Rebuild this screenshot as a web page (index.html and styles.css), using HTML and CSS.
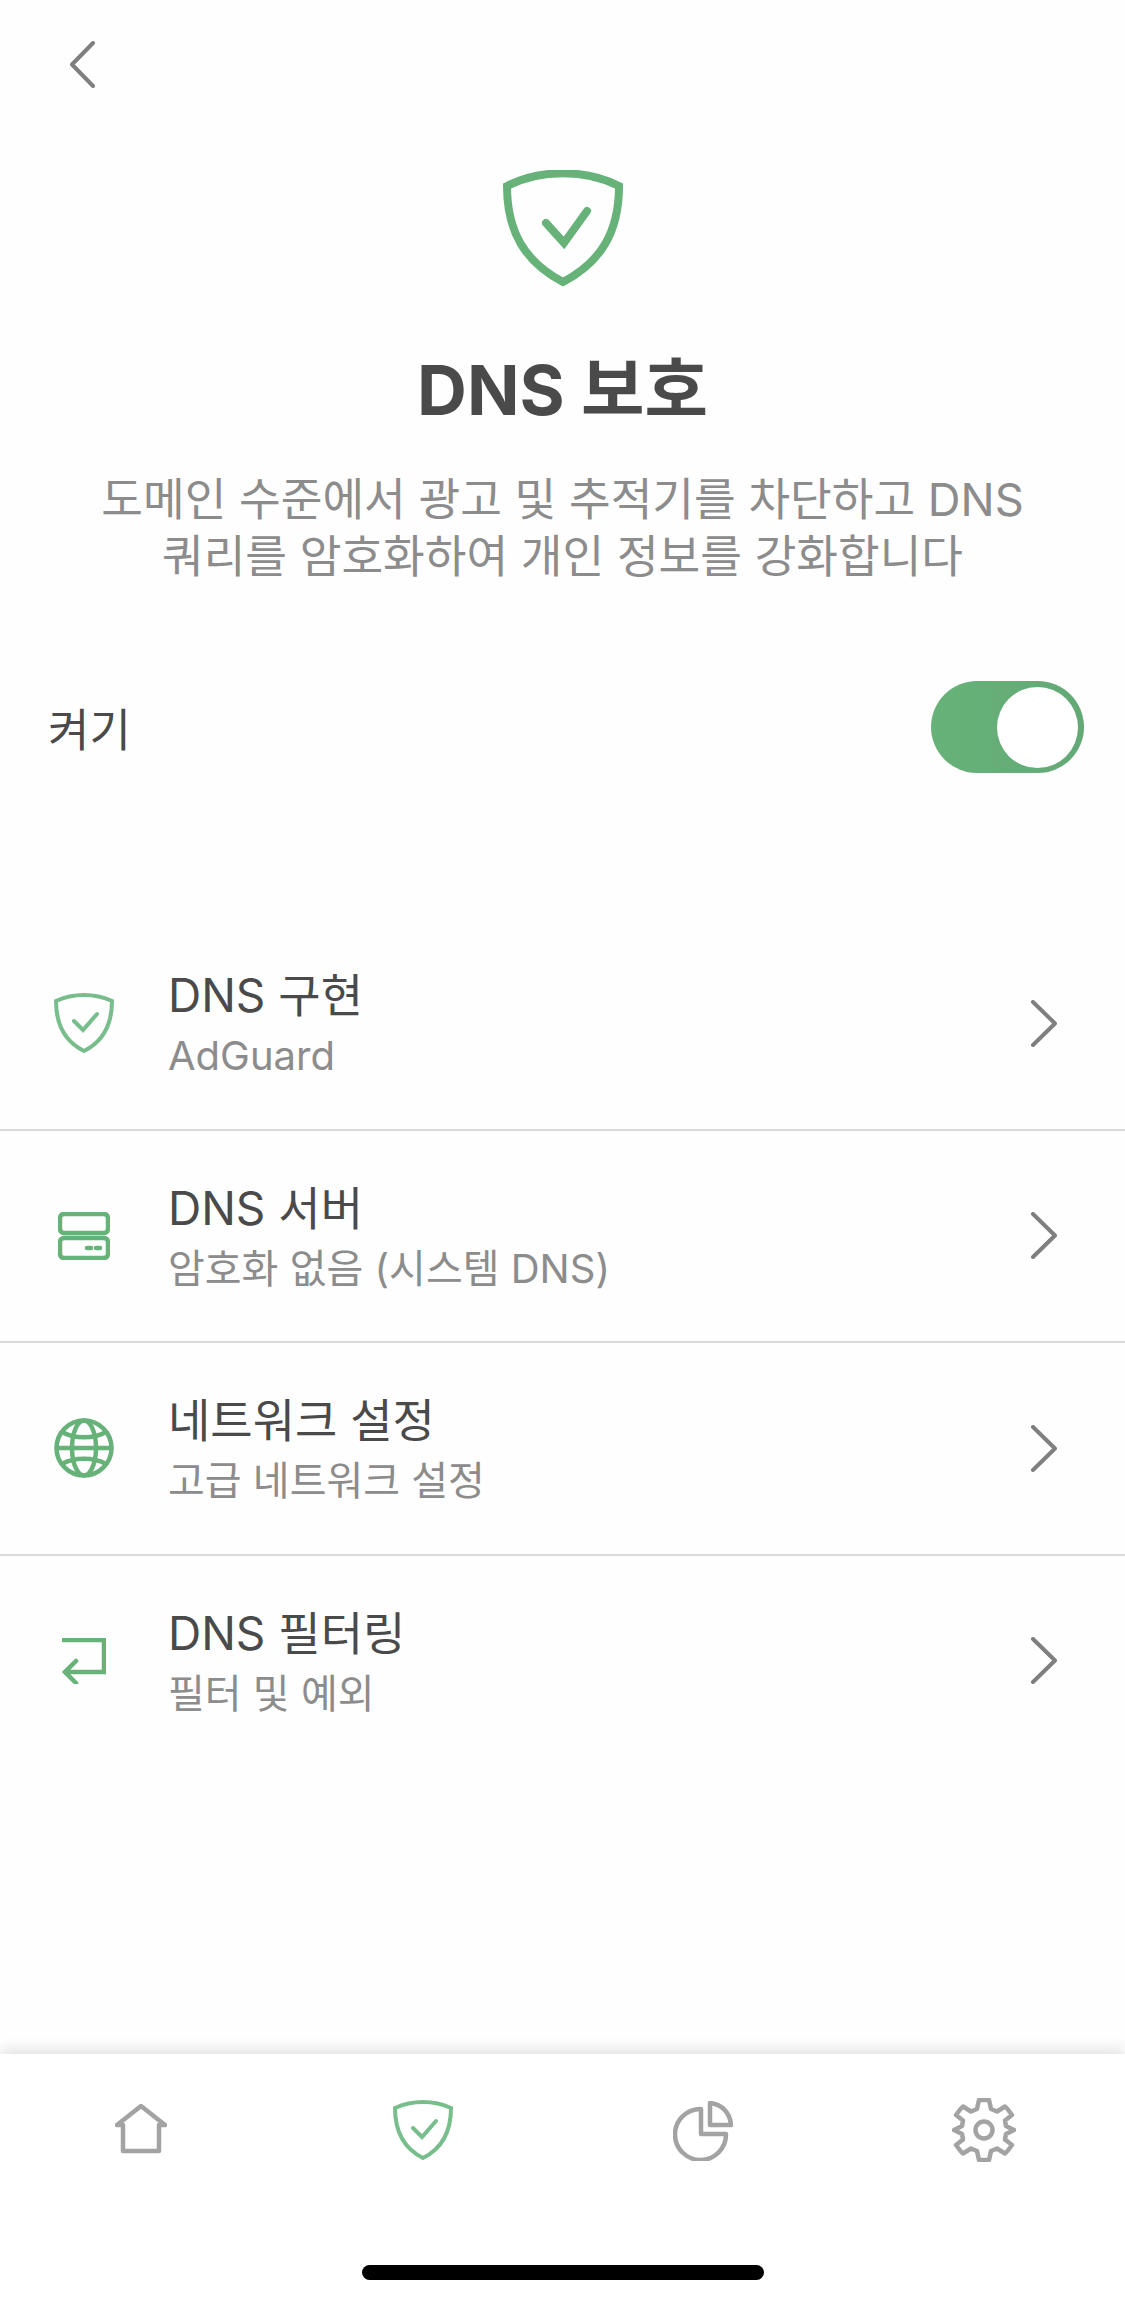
FILE: index.html
```html
<!DOCTYPE html>
<html lang="ko">
<head>
    <meta charset="UTF-8">
    <meta name="viewport" content="width=device-width, initial-scale=1.0">
    <title>DNS 보호</title>
    <link rel="stylesheet" href="styles.css">
</head>
<body>
<div class="screen">
    <div class="nav-container">
        <svg class="back-icon" viewBox="0 0 26 47"><path d="M24 2 3 23.500 24 45"/></svg>
    </div>

    <div class="hero">
        <svg class="hero-shield" viewBox="0 0 120 118">
            <path class="shield-line" d="M4 16C37-1 83-1 116 16 116 62 98 92 60 112 22 92 4 62 4 16Z"/>
            <path class="shield-line" d="M43 53 61 73 84 41"/>
        </svg>
        <h1 class="hero-title">DNS 보호</h1>
        <p class="hero-text">도메인 수준에서 광고 및 추적기를 차단하고 DNS<br>쿼리를 암호화하여 개인 정보를 강화합니다</p>
    </div>

    <div class="toggle-row">
        <span class="toggle-label">켜기</span>
        <div class="toggle"><div class="toggle-knob"></div></div>
    </div>

    <div class="menu-list">
        <div class="menu-row">
            <div class="menu-icon">
                <svg class="icon-shield" viewBox="0 0 60 60">
                    <path class="line-green-soft" d="M2 8C19 0 41 0 58 8 58 32 48 49 30 58 12 49 2 32 2 8Z"/>
                    <path class="line-green-soft" d="M20 28 29 37 43 21"/>
                </svg>
            </div>
            <div class="menu-text">
                <div class="menu-title">DNS 구현</div>
                <div class="menu-sub">AdGuard</div>
            </div>
            <svg class="chevron" viewBox="0 0 27 47"><path d="M3 2 25 23.500 3 45"/></svg>
        </div>
        <div class="menu-row">
            <div class="menu-icon">
                <svg class="icon-server" viewBox="0 0 52 48">
                    <rect class="line-green" x="2" y="2" width="48" height="19" rx="4"/>
                    <rect class="line-green" x="2" y="26" width="48" height="20" rx="4"/>
                    <path class="line-green" d="M29 36H33M38 36H42"/>
                </svg>
            </div>
            <div class="menu-text">
                <div class="menu-title">DNS 서버</div>
                <div class="menu-sub">암호화 없음 (시스템 DNS)</div>
            </div>
            <svg class="chevron" viewBox="0 0 27 47"><path d="M3 2 25 23.500 3 45"/></svg>
        </div>
        <div class="menu-row">
            <div class="menu-icon">
                <svg class="icon-globe" viewBox="0 0 60 60">
                    <circle class="line-green" cx="30" cy="30" r="27.500"/>
                    <ellipse class="line-green" cx="30" cy="30" rx="12" ry="27.500"/>
                    <path class="line-green" d="M3 30H57M8 14C20 21 40 21 52 14M8 46C20 39 40 39 52 46"/>
                </svg>
            </div>
            <div class="menu-text">
                <div class="menu-title">네트워크 설정</div>
                <div class="menu-sub">고급 네트워크 설정</div>
            </div>
            <svg class="chevron" viewBox="0 0 27 47"><path d="M3 2 25 23.500 3 45"/></svg>
        </div>
        <div class="menu-row">
            <div class="menu-icon">
                <svg class="icon-arrow" viewBox="0 0 44 46">
                    <path class="line-green" d="M1 2H42V34H3M14 23 3 34 14 45"/>
                </svg>
            </div>
            <div class="menu-text">
                <div class="menu-title">DNS 필터링</div>
                <div class="menu-sub">필터 및 예외</div>
            </div>
            <svg class="chevron" viewBox="0 0 27 47"><path d="M3 2 25 23.500 3 45"/></svg>
        </div>
    </div>

    <div class="tab-bar">
        <div class="tabs">
            <div class="tab">
                <svg class="tab-home" viewBox="0 0 52 50">
                    <path class="line-grey" d="M2 21 26 2 50 21H44V47H8V21Z"/>
                </svg>
            </div>
            <div class="tab">
                <svg class="icon-shield tab-shield" viewBox="0 0 60 60">
                    <path class="line-green-soft" d="M2 8C19 0 41 0 58 8 58 32 48 49 30 58 12 49 2 32 2 8Z"/>
                    <path class="line-green-soft" d="M20 28 29 37 43 21"/>
                </svg>
            </div>
            <div class="tab">
                <svg class="tab-pie" viewBox="0 0 60 60">
                    <path class="line-grey" d="M28 8A25.500 25.500 0 1 0 53 33H28Z"/>
                    <path class="line-grey" d="M37 2C49 3 57 12 58 24H37Z"/>
                </svg>
            </div>
            <div class="tab">
                <svg class="tab-gear" viewBox="0 0 64 64">
                    <path class="line-grey" d="M27 2H37L39 11 45 13.500 53 8.500 55.500 11 60 17 53 22.500 54 28 62 32 54 36 53 41.500 60 47 55.500 53 53 55.500 45 50.500 39 53 37 62H27L25 53 19 50.500 11 55.500 8.500 53 4 47 11 41.500 10 36 2 32 10 28 11 22.500 4 17 8.500 11 11 8.500 19 13.500 25 11Z"/>
                    <circle class="line-grey" cx="32" cy="32" r="8.500"/>
                </svg>
            </div>
        </div>
        <div class="home-indicator"></div>
    </div>
</div>
</body>
</html>
```

FILE: styles.css
```css
* {
    box-sizing: border-box;
}

body {
    margin: 0;
    background-color: #fefefe;
    font-family: 'Inter', 'Noto Sans CJK KR', sans-serif;
}

.screen {
    display: flex;
    flex-direction: column;
    width: 1125px;
    height: 2304px;
    overflow: hidden;
}

svg {
    display: block;
    fill: none;
}

svg path,
svg rect,
svg circle,
svg ellipse {
    fill: none;
}

.nav-container {
    height: 170px;
    padding: 41px 0 0 69px;
}

.back-icon {
    width: 26px;
    height: 47px;
    stroke: #7f7f7f;
    stroke-width: 4;
    stroke-linecap: round;
    stroke-linejoin: round;
}

.hero {
    display: flex;
    flex-direction: column;
    align-items: center;
    text-align: center;
}

.hero-shield {
    width: 120px;
    height: 118px;
}

.shield-line {
    stroke: #67b279;
    stroke-width: 8;
    stroke-linecap: round;
}

.hero-title {
    margin: 57px 0 0;
    font-size: 69px;
    line-height: 90px;
    font-weight: 700;
    color: #4a4a4a;
}

.hero-text {
    margin: 36px 0 0;
    font-size: 45.300px;
    line-height: 57px;
    color: #8c8c8c;
}

.toggle-row {
    display: flex;
    align-items: center;
    justify-content: space-between;
    margin-top: 96px;
    padding: 0 41px 0 48px;
}

.toggle-label {
    font-size: 45px;
    color: #4a4a4a;
}

.toggle {
    display: flex;
    justify-content: flex-end;
    align-items: center;
    width: 153px;
    height: 92px;
    padding-right: 6px;
    border-radius: 46px;
    background: linear-gradient(90deg, #67b279, #63a976);
}

.toggle-knob {
    width: 81px;
    height: 81px;
    border-radius: 50%;
    background-color: #fff;
}

.menu-list {
    margin-top: 145px;
}

.menu-row {
    display: flex;
    align-items: center;
    height: 212.500px;
    padding: 0 68px 0 48px;
    border-bottom: 2px solid #d9d9d9;
}

.menu-row:last-child {
    border-bottom: none;
    height: 210px;
}

.menu-icon {
    display: flex;
    justify-content: center;
    align-items: center;
    width: 72px;
    margin-right: 48px;
}

.menu-text {
    flex: 1;
    padding-top: 6px;
}

.menu-title {
    font-size: 46px;
    line-height: 60px;
    color: #4a4a4a;
}

.menu-sub {
    font-size: 40px;
    line-height: 62px;
    color: #8c8c8c;
}

.chevron {
    width: 27px;
    height: 47px;
    stroke: #7f7f7f;
    stroke-width: 4;
    stroke-linecap: round;
    stroke-linejoin: round;
}

.icon-shield {
    width: 60px;
    height: 60px;
}

.icon-server {
    width: 52px;
    height: 48px;
}

.icon-globe {
    width: 60px;
    height: 60px;
}

.icon-arrow {
    width: 44px;
    height: 46px;
}

.line-green {
    stroke: #67b279;
    stroke-width: 4.500;
    stroke-linecap: round;
}

.line-green-soft {
    stroke: #78bd8c;
    stroke-width: 4;
    stroke-linecap: round;
}

.line-grey {
    stroke: #a3a3a3;
    stroke-width: 4.500;
    stroke-linejoin: round;
    stroke-linecap: round;
}

.tab-bar {
    margin-top: auto;
    height: 250px;
    background-color: #fff;
    box-shadow: 0 -4px 14px rgba(0, 0, 0, 0.12);
}

.tabs {
    display: grid;
    grid-template-columns: repeat(4, 1fr);
    height: 211px;
    padding-top: 44px;
}

.tab {
    display: flex;
    justify-content: center;
}

.tab-shield {
    margin: 2px 0 0 2px;
}

.tab-home {
    width: 52px;
    height: 50px;
    margin-top: 6px;
}

.tab-pie {
    width: 60px;
    height: 60px;
    margin-top: 3px;
}

.tab-gear {
    width: 64px;
    height: 64px;
}

.home-indicator {
    width: 402px;
    height: 15px;
    margin: 0 auto;
    border-radius: 8px;
    background-color: #000;
}
```
